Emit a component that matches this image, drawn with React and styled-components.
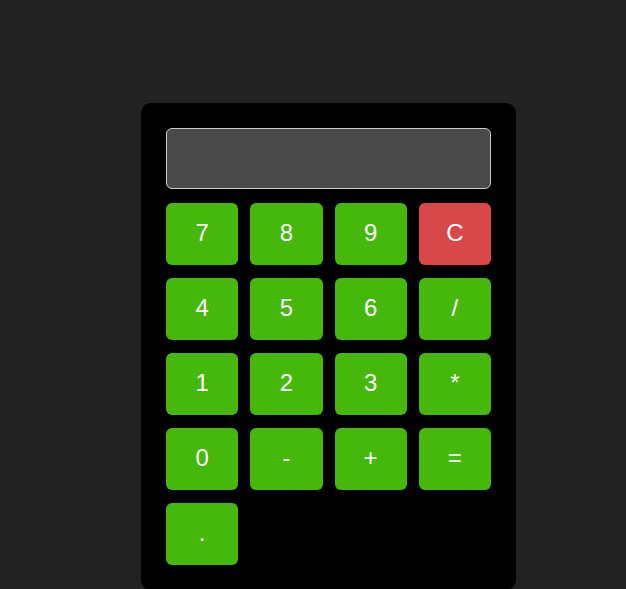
import React from "react";
import styled, { createGlobalStyle } from "styled-components";

const keys = ["7", "8", "9", "C", "4", "5", "6", "/", "1", "2", "3", "*", "0", "-", "+", "=", "."];

const App = () => {
  return (
    <>
      <GlobalStyle />
      <Page>
        <Calculator>
          <Display type="text" readOnly value="" />
          <Keys>
            {keys.map((k) => (
              <Key key={k} $clear={k === "C"}>
                {k}
              </Key>
            ))}
          </Keys>
        </Calculator>
      </Page>
    </>
  );
};

// styled components
const GlobalStyle = createGlobalStyle`
  body {
    margin: 0;
    background: #222222;
    font-family: "Liberation Sans", Arial, sans-serif;
    overflow: hidden;
  }
`;

const Page = styled.div`
  display: flex;
  padding-top: 103px;
  padding-left: 141px;
`;

const Calculator = styled.div`
  width: 325px;
  padding: 25px;
  background: #000;
  border-radius: 10px;
  display: flex;
  flex-direction: column;
  gap: 14px;
`;

const Display = styled.input`
  box-sizing: border-box;
  width: 100%;
  height: 61px;
  margin: 0;
  background: #4a4a4a;
  border: 1px solid #cccccc;
  border-radius: 6px;
  outline: none;
`;

const Keys = styled.div`
  display: grid;
  grid-template-columns: repeat(4, 1fr);
  grid-auto-rows: 62px;
  column-gap: 12px;
  row-gap: 13px;
`;

const Key = styled.button`
  border: none;
  border-radius: 6px;
  background: ${(p) => (p.$clear ? "#d8474a" : "#45b80b")};
  color: #fff;
  font-family: "Liberation Sans", Arial, sans-serif;
  font-size: 24px;
  padding: 0 0 2px;
  cursor: pointer;
`;

export default App;
